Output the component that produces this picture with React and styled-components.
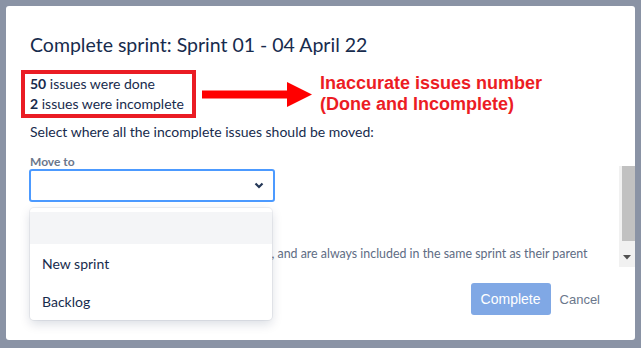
import React from "react";
import styled, { createGlobalStyle } from "styled-components";

const GlobalStyle = createGlobalStyle`
  body {
    margin: 0;
    background: #8a93a5;
    font-family: Lato, "Noto Sans", sans-serif;
  }
`;

const Backdrop = styled.div`
  width: 641px;
  height: 348px;
  box-sizing: border-box;
  padding: 6px 6px 8px 6px;
  background: #8a93a5;
`;

const Modal = styled.div`
  position: relative;
  height: 100%;
  box-sizing: border-box;
  background: #fff;
  border-radius: 3px;
  padding: 27px 26px 25px 24px;
  display: flex;
  flex-direction: column;
  overflow: hidden;
  color: #172b4d;
`;

const Title = styled.h2`
  margin: 0;
  font-size: 19.5px;
  line-height: 24px;
  font-weight: 400;
  color: #172b4d;
`;

const SummaryRow = styled.div`
  display: flex;
  align-items: center;
  margin: 13px 0 0 -9px;
`;

const RedBox = styled.div`
  width: 175px;
  box-sizing: border-box;
  border: 4px solid #ea1c24;
  padding: 0 4px 0 5px;
  font-size: 14px;
  line-height: 20px;
  white-space: nowrap;
`;

const Note = styled.div`
  margin-left: 8px;
  font-family: "Liberation Sans", Arial, sans-serif;
  font-weight: 700;
  font-size: 18px;
  line-height: 21px;
  color: #ec1c24;
`;

const Para = styled.p`
  margin: ${(p) => p.$mt || 0}px 0 0;
  font-size: ${(p) => p.$size || 14}px;
  line-height: ${(p) => p.$lh || 20}px;
  color: ${(p) => p.$color || "#172b4d"};
  max-width: ${(p) => (p.$width ? p.$width + "px" : "none")};
`;

const Label = styled.label`
  margin-top: 12px;
  font-size: 12px;
  line-height: 15px;
  font-weight: 700;
  color: #6b778c;
`;

const SelectWrap = styled.div`
  position: relative;
  margin-left: -1px;
  width: 246px;
`;

const SelectBox = styled.div`
  height: 33px;
  box-sizing: border-box;
  border: 2px solid #4c9aff;
  border-radius: 3px;
  display: flex;
  align-items: center;
  justify-content: flex-end;
  padding-right: 9px;
`;

const Menu = styled.ul`
  position: absolute;
  top: 39px;
  left: 1px;
  width: 242px;
  margin: 0;
  padding: 4px 0 0;
  list-style: none;
  background: #fff;
  border-radius: 4px;
  box-shadow: 0 4px 11px rgba(9, 30, 66, 0.15), 0 0 0 1px rgba(9, 30, 66, 0.06);
  z-index: 2;
`;

const Option = styled.li`
  height: ${(p) => (p.$empty ? 32 : 38)}px;
  padding: 0 12px;
  display: flex;
  align-items: center;
  font-size: 14px;
  color: #172b4d;
  background: ${(p) => (p.$active ? "#f4f5f7" : "transparent")};
`;

const Footer = styled.div`
  margin-top: auto;
  display: flex;
  justify-content: flex-end;
  align-items: center;
  font-family: "Liberation Sans", Arial, sans-serif;
`;

const Button = styled.button`
  height: 32px;
  border: none;
  border-radius: 3px;
  font-family: inherit;
  font-size: ${(p) => (p.$primary ? 14 : 13)}px;
  padding: 0 ${(p) => (p.$primary ? 10 : 9)}px;
  background: ${(p) => (p.$primary ? "#80a8e5" : "transparent")};
  color: ${(p) => (p.$primary ? "#fff" : "#6b778c")};
  font-weight: ${(p) => (p.$primary ? 500 : 400)};
`;

const Scrollbar = styled.div`
  position: absolute;
  right: 0;
  top: 160px;
  width: 16px;
  height: 101px;
  background: #f1f1f1;
  display: flex;
  flex-direction: column;
  align-items: center;
`;

const Thumb = styled.div`
  width: 13px;
  height: 75px;
  margin-left: 2px;
  background: #c1c1c1;
`;

const Chevron = () => (
  <svg width="10" height="7" viewBox="0 0 10 7">
    <path d="M1.5 1.5L5 5l3.5-3.5" fill="none" stroke="#253858" strokeWidth="2.2" />
  </svg>
);

const RedArrow = () => (
  <svg width="110" height="25" viewBox="0 0 110 25" style={{ marginLeft: 6, flexShrink: 0 }}>
    <rect x="0" y="8.5" width="86" height="8" fill="#ff0000" />
    <polygon points="85,0 110,12.5 85,25" fill="#ff0000" />
  </svg>
);

export default function App() {
  return (
    <>
      <GlobalStyle />
      <Backdrop>
        <Modal>
          <Title>Complete sprint: Sprint 01 - 04 April 22</Title>
          <SummaryRow>
            <RedBox>
              <div><b>50</b> issues were done</div>
              <div><b>2</b> issues were incomplete</div>
            </RedBox>
            <RedArrow />
            <Note>
              Inaccurate issues number
              <br />
              (Done and Incomplete)
            </Note>
          </SummaryRow>
          <Para $mt={4}>Select where all the incomplete issues should be moved:</Para>
          <Label>Move to</Label>
          <SelectWrap>
            <SelectBox>
              <Chevron />
            </SelectBox>
            <Menu>
              <Option $empty $active />
              <Option>New sprint</Option>
              <Option>Backlog</Option>
            </Menu>
          </SelectWrap>
          <Para $mt={44} $size={12.4} $lh={16} $color="#5e6c84" $width={575}>
            Sub-tasks are not included in the total above, and are always included in the same sprint as their parent issue.
          </Para>
          <Footer>
            <Button $primary>Complete</Button>
            <Button>Cancel</Button>
          </Footer>
          <Scrollbar>
            <Thumb />
            <svg width="8" height="5" viewBox="0 0 8 5" style={{ marginTop: 14 }}>
              <polygon points="0,0 8,0 4,4.5" fill="#505050" />
            </svg>
          </Scrollbar>
        </Modal>
      </Backdrop>
    </>
  );
}
